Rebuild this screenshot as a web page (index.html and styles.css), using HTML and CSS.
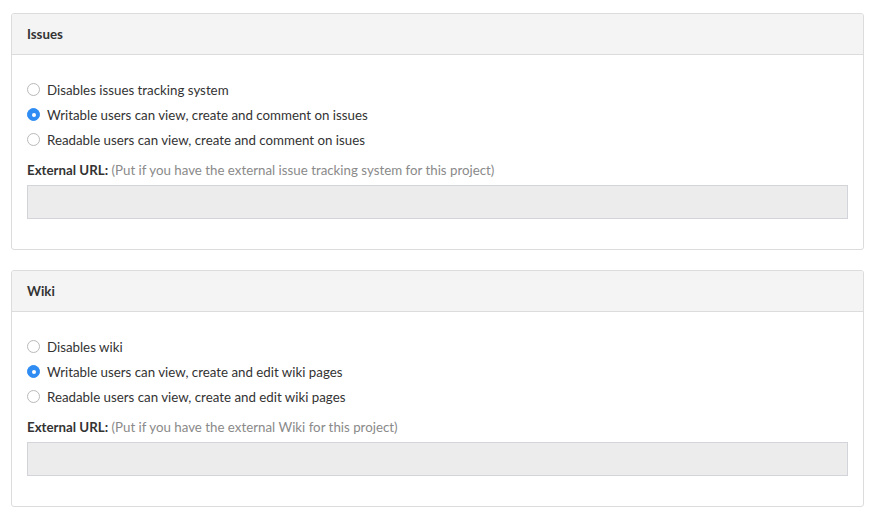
FILE: index.html
```html
<!DOCTYPE html>
<html lang="en">
<head>
<meta charset="utf-8">
<title>Settings</title>
<link rel="stylesheet" href="styles.css">
</head>
<body>
<div class="page">
  <section class="card">
    <header class="card-header">Issues</header>
    <div class="card-body">
      <div class="radios">
        <label class="radio"><span class="dot"></span><span>Disables issues tracking system</span></label>
        <label class="radio"><span class="dot checked"></span><span>Writable users can view, create and comment on issues</span></label>
        <label class="radio"><span class="dot"></span><span>Readable users can view, create and comment on isues</span></label>
      </div>
      <div class="field-label"><strong>External URL:</strong> <span class="hint">(Put if you have the external issue tracking system for this project)</span></div>
      <div class="input"></div>
    </div>
  </section>
  <section class="card">
    <header class="card-header">Wiki</header>
    <div class="card-body">
      <div class="radios">
        <label class="radio"><span class="dot"></span><span>Disables wiki</span></label>
        <label class="radio"><span class="dot checked"></span><span>Writable users can view, create and edit wiki pages</span></label>
        <label class="radio"><span class="dot"></span><span>Readable users can view, create and edit wiki pages</span></label>
      </div>
      <div class="field-label"><strong>External URL:</strong> <span class="hint">(Put if you have the external Wiki for this project)</span></div>
      <div class="input"></div>
    </div>
  </section>
</div>
</body>
</html>
```

FILE: styles.css
```css
* { box-sizing: border-box; }
html, body { margin: 0; padding: 0; background: #fff; }
body {
  font-family: "Lato", "Open Sans", sans-serif;
  font-size: 13.3px;
  color: #333;
}
.page {
  padding: 13px 15px 0 11px;
  display: flex;
  flex-direction: column;
  gap: 20px;
}
.card {
  border: 1px solid #dcdcdc;
  border-radius: 3px;
  background: #fff;
  overflow: hidden;
}
.card-header {
  height: 41px;
  line-height: 40px;
  padding: 0 15px;
  background: #f4f4f4;
  border-bottom: 1px solid #dcdcdc;
  font-weight: 700;
}
.card-body {
  padding: 22px 15px 30px;
}
.radios {
  display: flex;
  flex-direction: column;
}
.radio {
  display: flex;
  align-items: center;
  height: 25px;
  gap: 7px;
}
.dot {
  width: 13px;
  height: 13px;
  border-radius: 50%;
  border: 1px solid #b9b9b9;
  background: #fff;
  flex: none;
  display: flex;
  align-items: center;
  justify-content: center;
}
.dot.checked {
  background: #2f8cf3;
  border-color: #2f8cf3;
}
.dot.checked::after {
  content: "";
  width: 4px;
  height: 4px;
  border-radius: 50%;
  background: #fff;
}
.field-label {
  margin-top: 8px;
  line-height: 20px;
}
.field-label strong { font-weight: 700; }
.hint { color: #8a8a8a; }
.input {
  margin-top: 5px;
  height: 34px;
  background: #ececec;
  border: 1px solid #d3d4d9;
}
```
